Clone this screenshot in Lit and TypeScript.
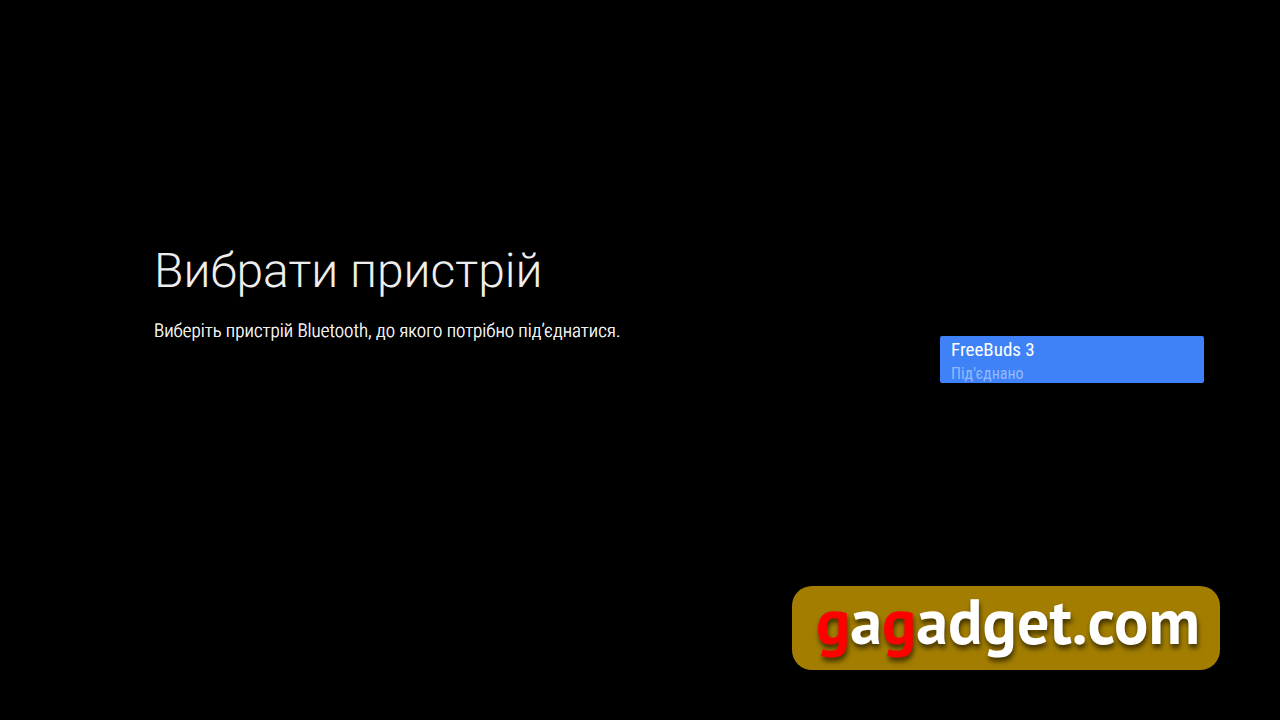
import { LitElement, html, css } from "lit";
import { customElement } from "lit/decorators.js";

@customElement("app-root")
class AppRoot extends LitElement {
  static styles = css`
    :host {
      display: block;
      position: relative;
      min-height: 100vh;
      background: #000;
      color: #eee;
      font-family: "Roboto Condensed", Roboto, sans-serif;
      text-rendering: geometricPrecision;
    }
    main {
      display: flex;
      align-items: center;
      justify-content: space-between;
      box-sizing: border-box;
      min-height: 100vh;
      padding: 0 76px 1px 154px;
    }
    .guidance {
      padding-bottom: 133px;
    }
    h1 {
      margin: 0 0 20px;
      font-family: Roboto, sans-serif;
      font-size: 48px;
      line-height: 56px;
      font-weight: 300;
    }
    p {
      margin: 0;
      font-size: 19px;
      line-height: 24px;
      font-weight: 300;
      text-shadow: 0 0 currentColor;
    }
    .device {
      display: flex;
      flex-direction: column;
      box-sizing: border-box;
      width: 264px;
      padding: 1px 11px 0;
      border: 0;
      border-radius: 2px;
      background: #3f82f8;
      color: #fff;
      font: inherit;
      text-align: left;
    }
    .name {
      font-size: 19px;
      line-height: 26px;
    }
    .status {
      padding-top: 2px;
      font-size: 16px;
      line-height: 18px;
      color: #93b9fb;
    }
    .brand {
      position: absolute;
      right: 60px;
      bottom: 50px;
      box-sizing: border-box;
      height: 84px;
      padding: 0 20px 0 24px;
      border-radius: 20px;
      background: #a27d00;
      color: #fff;
      font: bold 64px/70px "PT Sans", "Noto Sans SemiCondensed", "Noto Sans", sans-serif;
      text-decoration: none;
      text-shadow: 1px 4px 5px rgba(0, 0, 0, 0.6);
    }
    .accent {
      color: #f00;
    }
  `;

  render() {
    return html`
      <main>
        <section class="guidance">
          <h1>Вибрати пристрій</h1>
          <p>Виберіть пристрій Bluetooth, до якого потрібно під’єднатися.</p>
        </section>
        <button class="device">
          <span class="name">FreeBuds 3</span>
          <span class="status">Під'єднано</span>
        </button>
      </main>
      <a class="brand" href="#"><span class="accent">g</span>a<span class="accent">g</span>adget.com</a>
    `;
  }
}
